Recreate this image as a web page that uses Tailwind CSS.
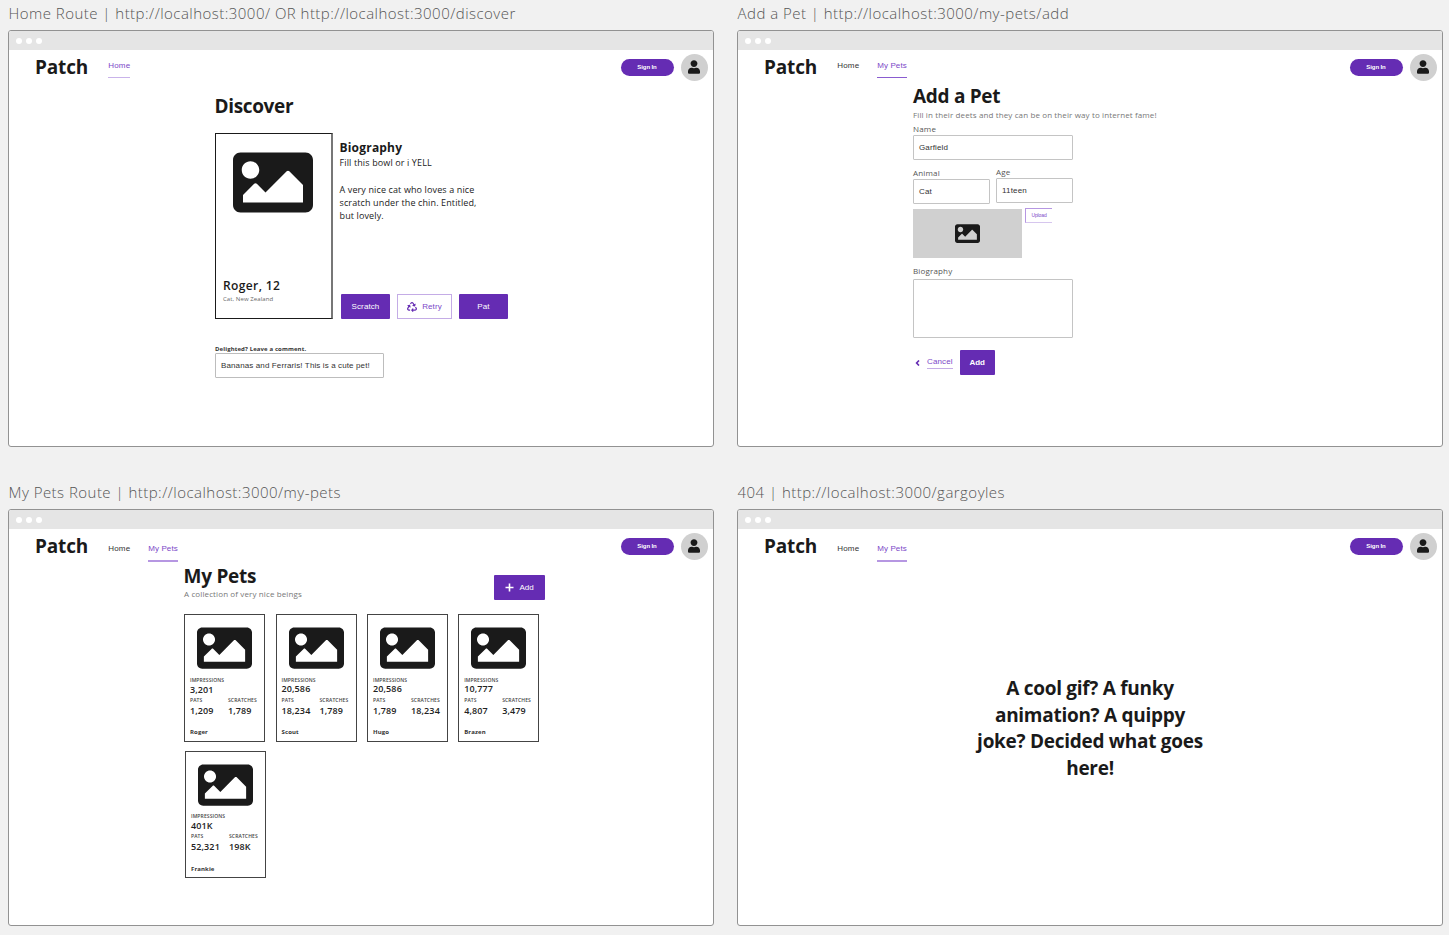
<!DOCTYPE html>
<html lang="en">
<head>
<meta charset="utf-8">
<title>Patch wireframes</title>
<script src="https://cdn.jsdelivr.net/npm/@tailwindcss/browser@4"></script>
</head>
<body class="h-[935px] overflow-hidden bg-[#f1f1f1] font-['Open_Sans',sans-serif] whitespace-nowrap text-[#1a1a1a]">

<svg class="hidden">
  <symbol id="image" viewBox="0 64 512 384"><path d="M464 448H48c-26.51 0-48-21.49-48-48V112c0-26.51 21.49-48 48-48h416c26.51 0 48 21.49 48 48v288c0 26.51-21.49 48-48 48zM112 120c-30.928 0-56 25.072-56 56s25.072 56 56 56 56-25.072 56-56-25.072-56-56-56zM64 384h384V272l-87.515-87.515c-4.686-4.686-12.284-4.686-16.971 0L208 320l-55.515-55.515c-4.686-4.686-12.284-4.686-16.971 0L64 336v48z"/></symbol>
  <symbol id="user" viewBox="0 0 448 512"><path d="M224 256c70.7 0 128-57.3 128-128S294.7 0 224 0 96 57.3 96 128s57.3 128 128 128zm89.6 32h-16.7c-22.2 10.2-46.9 16-72.9 16s-50.6-5.8-72.9-16h-16.7C60.2 288 0 348.2 0 422.4V464c0 26.5 21.5 48 48 48h352c26.5 0 48-21.5 48-48v-41.6c0-74.2-60.2-134.4-134.4-134.4z"/></symbol>
  <symbol id="recycle" viewBox="0 0 512 512"><path d="M184.561 261.903c3.232 13.997-12.123 24.635-24.068 17.168l-40.736-25.455-50.867 81.402C55.606 356.273 70.96 384 96.012 384H148c6.627 0 12 5.373 12 12v40c0 6.627-5.373 12-12 12H96.115c-75.334 0-121.302-83.048-81.408-146.88l50.822-81.388-40.725-25.448c-12.081-7.547-8.966-25.961 4.879-29.158l110.237-25.45c8.611-1.988 17.201 3.381 19.189 11.99l25.452 110.237zm98.561-182.915l41.289 66.076-40.74 25.457c-12.051 7.528-9 25.953 4.879 29.158l110.237 25.45c8.672 1.999 17.215-3.438 19.189-11.99l25.45-110.237c3.197-13.844-11.99-24.719-24.068-17.168l-40.687 25.424-41.263-66.082c-37.521-60.033-125.209-60.171-162.816 0l-17.963 28.766c-3.51 5.62-1.8 13.021 3.82 16.533l33.919 21.195c5.62 3.512 13.024 1.803 16.536-3.817l17.961-28.743c12.712-20.341 41.973-19.676 54.257-.022zM497.288 301.12l-27.515-44.065c-3.511-5.623-10.916-7.334-16.538-3.821l-33.861 21.159c-5.62 3.512-7.33 10.915-3.818 16.536l27.564 44.112c13.257 21.211-2.057 48.96-27.136 48.96H320V336.02c0-14.213-17.242-21.383-27.313-11.313l-80 79.981c-6.249 6.248-6.249 16.379 0 22.627l80 79.989C302.689 517.308 320 510.3 320 495.989V448h95.88c75.274 0 121.335-82.997 81.408-146.88z"/></symbol>
</svg>

<div class="grid grid-cols-[706px_706px] grid-rows-[443px_443px] gap-x-[23px] gap-y-9 pt-1 pl-2">

  <!-- Home route -->
  <section>
    <h2 class="-mt-px mb-[7px] h-5 pl-[0.5px] text-[15px] leading-5 font-light tracking-[0.47px] text-[#555]">Home Route | http://localhost:3000/ OR http://localhost:3000/discover</h2>
    <div class="h-[417px] overflow-hidden rounded-[3px] border border-[#929292] bg-white">
      <div class="flex h-[19px] items-center gap-1 bg-[#e5e5e5] pl-[7px]">
        <i class="size-1.5 rounded-full bg-white"></i><i class="size-1.5 rounded-full bg-white"></i><i class="size-1.5 rounded-full bg-white"></i>
      </div>
      <header class="flex h-[34px] items-center pr-[5.5px] pl-[26px]">
        <div class="w-[73.3px] text-[19px] leading-7 font-bold tracking-[-0.15px]">Patch</div>
        <nav class="mt-1 flex gap-[18px] font-['Liberation_Sans',sans-serif] text-[8px] leading-3">
          <a class="h-[18px] border-b border-[#c9b3ea] tracking-[0.15px] text-[#7c48c8]">Home</a>
        </nav>
        <div class="ml-auto flex items-center gap-[7px]">
          <button class="h-[17px] w-[53px] rounded-full bg-[#652cb3] text-center font-['Liberation_Sans',sans-serif] text-[6px] font-bold tracking-[-0.1px] text-white">Sign In</button>
          <div class="flex size-[27px] items-center justify-center rounded-full bg-[#d0d0d0]"><svg class="h-3.5 w-3 fill-[#1a1a1a]"><use href="#user"/></svg></div>
        </div>
      </header>
      <main class="pt-2 pl-[206px]">
        <h1 class="-ml-[0.5px] text-[19px] leading-7 font-bold tracking-[-0.35px]">Discover</h1>
        <div class="mt-[13px] flex h-[186px] gap-[7px]">
          <div class="flex w-[118px] flex-col border-[1.5px] border-r-2 border-[#1a1a1a] border-r-[#777] px-[7px] pt-[18px]">
            <svg class="ml-[10px] h-[61px] w-20 fill-[#1a1a1a]"><use href="#image"/></svg>
            <div class="mt-[65px] text-[12px] leading-4 font-semibold tracking-[0.38px]">Roger, 12</div>
            <div class="mt-px text-[6px] leading-2 tracking-[0.09px] text-[#666]">Cat, New Zealand</div>
          </div>
          <div class="flex flex-col pt-1.5">
            <h3 class="-ml-[0.5px] text-[12px] leading-[17px] font-bold tracking-[0.2px]">Biography</h3>
            <p class="-ml-[0.5px] text-[9px] leading-[13.3px] tracking-[0.12px] text-[#222]">Fill this bowl or i YELL<br><br>A very nice cat who loves a nice<br>scratch under the chin. Entitled,<br>but lovely.</p>
            <div class="mt-auto ml-px flex gap-[7px] font-['Liberation_Sans',sans-serif] text-[8px] tracking-[0.1px]">
              <button class="h-[25px] w-[49px] rounded-[1px] bg-[#652cb3] text-white">Scratch</button>
              <button class="flex h-[25px] w-[55px] items-center justify-center gap-[5px] border border-[#c4ace6] text-[#7c48c8]"><svg class="size-2.5 fill-[#652cb3]"><use href="#recycle"/></svg>Retry</button>
              <button class="h-[25px] w-[49px] rounded-[1px] bg-[#652cb3] text-white">Pat</button>
            </div>
          </div>
        </div>
        <div class="mt-[26px] text-[6px] leading-2 font-bold tracking-[0.12px] text-[#333]">Delighted? Leave a comment.</div>
        <div class="flex h-[25px] w-[169px] items-center rounded-[1px] border border-[#bdbdbd] pl-[5px] font-['Liberation_Sans',sans-serif] text-[8px] tracking-[0.12px] text-[#333]">Bananas and Ferraris! This is a cute pet!</div>
      </main>
    </div>
  </section>

  <!-- Add a pet -->
  <section>
    <h2 class="-mt-px mb-[7px] h-5 pl-[0.5px] text-[15px] leading-5 font-light tracking-[0.47px] text-[#555]">Add a Pet | http://localhost:3000/my-pets/add</h2>
    <div class="h-[417px] overflow-hidden rounded-[3px] border border-[#929292] bg-white">
      <div class="flex h-[19px] items-center gap-1 bg-[#e5e5e5] pl-[7px]">
        <i class="size-1.5 rounded-full bg-white"></i><i class="size-1.5 rounded-full bg-white"></i><i class="size-1.5 rounded-full bg-white"></i>
      </div>
      <header class="flex h-[34px] items-center pr-[5.5px] pl-[26px]">
        <div class="w-[73.3px] text-[19px] leading-7 font-bold tracking-[-0.15px]">Patch</div>
        <nav class="mt-1 flex gap-[18px] font-['Liberation_Sans',sans-serif] text-[8px] leading-3">
          <a class="h-[18px] tracking-[0.15px] text-[#333]">Home</a>
          <a class="h-[18px] border-b border-[#8a5cd0] tracking-[0.1px] text-[#7c48c8]">My Pets</a>
        </nav>
        <div class="ml-auto flex items-center gap-[7px]">
          <button class="h-[17px] w-[53px] rounded-full bg-[#652cb3] text-center font-['Liberation_Sans',sans-serif] text-[6px] font-bold tracking-[-0.1px] text-white">Sign In</button>
          <div class="flex size-[27px] items-center justify-center rounded-full bg-[#d0d0d0]"><svg class="h-3.5 w-3 fill-[#1a1a1a]"><use href="#user"/></svg></div>
        </div>
      </header>
      <main class="-mt-0.5 pl-[175px]">
        <h1 class="text-[19px] leading-7 font-bold tracking-[-0.3px]">Add a Pet</h1>
        <p class="-mt-px text-[8px] leading-[11px] tracking-[0.12px] text-[#777]">Fill in their deets and they can be on their way to internet fame!</p>
        <div class="mt-[3px] mb-px text-[8px] leading-[11px] tracking-[0.18px] text-[#555]">Name</div>
        <div class="flex h-[25px] w-40 items-center rounded-[1px] border border-[#c4c4c4] pl-[5px] font-['Liberation_Sans',sans-serif] text-[8px] tracking-[0.13px] text-[#333]">Garfield</div>
        <div class="mt-1.5 flex gap-1.5 text-[8px] leading-[11px] tracking-[0.18px] text-[#555]">
          <div class="w-[77px]"><div class="mb-px pt-px">Animal</div><div class="flex h-[25px] items-center rounded-[1px] border border-[#c4c4c4] pl-[5px] font-['Liberation_Sans',sans-serif] text-[#333]">Cat</div></div>
          <div class="w-[77px]"><div class="mb-px">Age</div><div class="flex h-[25px] items-center rounded-[1px] border border-[#c4c4c4] pl-[5px] font-['Liberation_Sans',sans-serif] text-[#333]">11teen</div></div>
        </div>
        <div class="mt-[5px] flex gap-[3px]">
          <div class="flex h-[49px] w-[109px] items-center justify-center bg-[#d0d0d0]"><svg class="h-[19px] w-[25px] fill-[#1a1a1a]"><use href="#image"/></svg></div>
          <button class="-mt-px h-[15px] w-[27px] border border-r-0 border-[#b697e2] border-b-[#d6c6ee] font-['Liberation_Sans',sans-serif] text-[5px] tracking-[-0.1px] text-[#7c48c8]">Upload</button>
        </div>
        <div class="mt-[7px] text-[8px] leading-[11px] tracking-[0.16px] text-[#555]">Biography</div>
        <div class="mt-[3px] h-[59px] w-40 rounded-[1px] border border-[#c4c4c4]"></div>
        <div class="mt-3 flex items-center font-['Liberation_Sans',sans-serif] text-[8px]">
          <svg class="mr-[7px] ml-[2px] h-1.5 w-[5px] fill-none stroke-[#652cb3] stroke-[1.6]" viewBox="0 0 5 6"><path d="M4 .5 1.6 3 4 5.5"/></svg>
          <a class="mr-[7px] h-[13px] border-b border-[#c4ace6] leading-3 tracking-[0.12px] text-[#7c48c8]">Cancel</a>
          <button class="h-[25px] w-[35px] rounded-[1px] bg-[#652cb3] font-bold tracking-[-0.1px] text-white">Add</button>
        </div>
      </main>
    </div>
  </section>

  <!-- My pets route -->
  <section>
    <h2 class="-mt-px mb-[7px] h-5 pl-[0.5px] text-[15px] leading-5 font-light tracking-[0.47px] text-[#555]">My Pets Route | http://localhost:3000/my-pets</h2>
    <div class="h-[417px] overflow-hidden rounded-[3px] border border-[#929292] bg-white">
      <div class="flex h-[19px] items-center gap-1 bg-[#e5e5e5] pl-[7px]">
        <i class="size-1.5 rounded-full bg-white"></i><i class="size-1.5 rounded-full bg-white"></i><i class="size-1.5 rounded-full bg-white"></i>
      </div>
      <header class="flex h-[34px] items-center pr-[5.5px] pl-[26px]">
        <div class="w-[73.3px] text-[19px] leading-7 font-bold tracking-[-0.15px]">Patch</div>
        <nav class="mt-3 flex gap-[18px] font-['Liberation_Sans',sans-serif] text-[8px] leading-3">
          <a class="h-[19px] tracking-[0.15px] text-[#333]">Home</a>
          <a class="h-[19px] border-b-2 border-[#b697e2] tracking-[0.1px] text-[#7c48c8]">My Pets</a>
        </nav>
        <div class="ml-auto flex items-center gap-[7px]">
          <button class="h-[17px] w-[53px] rounded-full bg-[#652cb3] text-center font-['Liberation_Sans',sans-serif] text-[6px] font-bold tracking-[-0.1px] text-white">Sign In</button>
          <div class="flex size-[27px] items-center justify-center rounded-full bg-[#d0d0d0]"><svg class="h-3.5 w-3 fill-[#1a1a1a]"><use href="#user"/></svg></div>
        </div>
      </header>
      <main class="-mt-px pl-[175px]">
        <div class="flex w-[361px] items-start justify-between">
          <div>
            <h1 class="-ml-[0.5px] text-[19px] leading-7 font-bold tracking-[-0.25px]">My Pets</h1>
            <p class="-mt-0.5 text-[8px] leading-[11px] tracking-[0.12px] text-[#777]">A collection of very nice beings</p>
          </div>
          <button class="mt-[13px] flex h-[25px] w-[51px] items-center justify-center gap-[5px] rounded-[1px] bg-[#652cb3] font-['Liberation_Sans',sans-serif] text-[8px] text-white"><svg class="size-[9px] fill-none stroke-white stroke-[1.6]" viewBox="0 0 9 9"><path d="M4.500 .5v8M.5 4.500h8"/></svg>Add</button>
        </div>
        <div class="mt-3.5 grid grid-cols-[81px_81px_81px_81px] gap-x-[10.5px] gap-y-[9px] text-[9px] leading-3 font-semibold tracking-[0.12px] text-[#222]">
          <article class="h-[127.500px] border-[1.5px] border-[#444] px-[5px] pt-3">
            <svg class="mx-auto h-[42px] w-[55px] fill-[#1a1a1a]"><use href="#image"/></svg>
            <div class="mt-2 text-[5px] leading-[6px] text-[#444]">IMPRESSIONS</div>
            <div class="mt-px">3,201</div>
            <div class="mt-px grid grid-cols-[38px_auto] text-[5px] leading-[6px] text-[#444]"><span>PATS</span><span>SCRATCHES</span></div>
            <div class="mt-[2px] grid grid-cols-[38px_auto]"><span>1,209</span><span>1,789</span></div>
            <div class="mt-[11px] text-[6px] leading-2 font-bold text-[#333]">Roger</div>
          </article>
          <article class="h-[127.500px] border-[1.5px] border-[#444] px-[5px] pt-3">
            <svg class="mx-auto h-[42px] w-[55px] fill-[#1a1a1a]"><use href="#image"/></svg>
            <div class="mt-2 text-[5px] leading-[6px] text-[#444]">IMPRESSIONS</div>
            <div>20,586</div>
            <div class="mt-[1.5px] grid grid-cols-[38px_auto] text-[5px] leading-[6px] text-[#444]"><span>PATS</span><span>SCRATCHES</span></div>
            <div class="mt-[2px] grid grid-cols-[38px_auto]"><span>18,234</span><span>1,789</span></div>
            <div class="mt-[11.5px] text-[6px] leading-2 font-bold text-[#333]">Scout</div>
          </article>
          <article class="h-[127.500px] border-[1.5px] border-[#444] px-[5px] pt-3">
            <svg class="mx-auto h-[42px] w-[55px] fill-[#1a1a1a]"><use href="#image"/></svg>
            <div class="mt-2 text-[5px] leading-[6px] text-[#444]">IMPRESSIONS</div>
            <div>20,586</div>
            <div class="mt-[1.5px] grid grid-cols-[38px_auto] text-[5px] leading-[6px] text-[#444]"><span>PATS</span><span>SCRATCHES</span></div>
            <div class="mt-[2px] grid grid-cols-[38px_auto]"><span>1,789</span><span>18,234</span></div>
            <div class="mt-[11.5px] text-[6px] leading-2 font-bold text-[#333]">Hugo</div>
          </article>
          <article class="-ml-[0.3px] h-[127.500px] w-[81px] border-[1.5px] border-[#444] px-[5px] pt-3">
            <svg class="mx-auto h-[42px] w-[55px] fill-[#1a1a1a]"><use href="#image"/></svg>
            <div class="mt-2 text-[5px] leading-[6px] text-[#444]">IMPRESSIONS</div>
            <div>10,777</div>
            <div class="mt-[1.5px] grid grid-cols-[38px_auto] text-[5px] leading-[6px] text-[#444]"><span>PATS</span><span>SCRATCHES</span></div>
            <div class="mt-[2px] grid grid-cols-[38px_auto]"><span>4,807</span><span>3,479</span></div>
            <div class="mt-[11.5px] text-[6px] leading-2 font-bold text-[#333]">Brazen</div>
          </article>
          <article class="ml-px h-[127.500px] w-[81px] border-[1.5px] border-[#444] px-[5px] pt-3">
            <svg class="mx-auto h-[42px] w-[55px] fill-[#1a1a1a]"><use href="#image"/></svg>
            <div class="mt-[7px] text-[5px] leading-[6px] text-[#444]">IMPRESSIONS</div>
            <div class="mt-px">401K</div>
            <div class="mt-[1.5px] grid grid-cols-[38px_auto] text-[5px] leading-[6px] text-[#444]"><span>PATS</span><span>SCRATCHES</span></div>
            <div class="mt-[2px] grid grid-cols-[38px_auto]"><span>52,321</span><span>198K</span></div>
            <div class="mt-3 text-[6px] leading-2 font-bold text-[#333]">Frankie</div>
          </article>
        </div>
      </main>
    </div>
  </section>

  <!-- Not found -->
  <section>
    <h2 class="-mt-px mb-[7px] h-5 pl-[0.5px] text-[15px] leading-5 font-light tracking-[0.47px] text-[#555]">404 | http://localhost:3000/gargoyles</h2>
    <div class="h-[417px] overflow-hidden rounded-[3px] border border-[#929292] bg-white">
      <div class="flex h-[19px] items-center gap-1 bg-[#e5e5e5] pl-[7px]">
        <i class="size-1.5 rounded-full bg-white"></i><i class="size-1.5 rounded-full bg-white"></i><i class="size-1.5 rounded-full bg-white"></i>
      </div>
      <header class="flex h-[34px] items-center pr-[5.5px] pl-[26px]">
        <div class="w-[73.3px] text-[19px] leading-7 font-bold tracking-[-0.15px]">Patch</div>
        <nav class="mt-3 flex gap-[18px] font-['Liberation_Sans',sans-serif] text-[8px] leading-3">
          <a class="h-[19px] tracking-[0.15px] text-[#333]">Home</a>
          <a class="h-[19px] border-b-2 border-[#b697e2] tracking-[0.1px] text-[#7c48c8]">My Pets</a>
        </nav>
        <div class="ml-auto flex items-center gap-[7px]">
          <button class="h-[17px] w-[53px] rounded-full bg-[#652cb3] text-center font-['Liberation_Sans',sans-serif] text-[6px] font-bold tracking-[-0.1px] text-white">Sign In</button>
          <div class="flex size-[27px] items-center justify-center rounded-full bg-[#d0d0d0]"><svg class="h-3.5 w-3 fill-[#1a1a1a]"><use href="#user"/></svg></div>
        </div>
      </header>
      <main class="pt-[112px]">
        <h1 class="text-center text-[19px] leading-[26.600px] font-bold tracking-[-0.28px]">A cool gif? A funky<br>animation? A quippy<br>joke? Decided what goes<br>here!</h1>
      </main>
    </div>
  </section>

</div>
</body>
</html>
